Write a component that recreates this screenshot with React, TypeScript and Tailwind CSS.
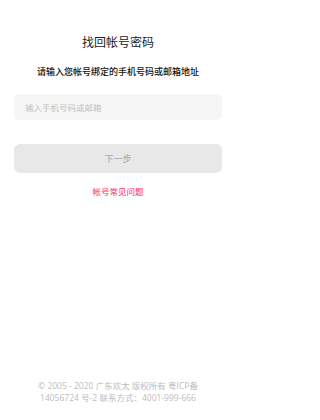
import React, { useState } from 'react';

const font = "font-['Noto_Sans_CJK_SC','Noto_Sans',sans-serif]";

const App: React.FC = () => {
    const [account, setAccount] = useState('');

    return (
        <div className={`flex min-h-[420px] w-[236px] flex-col bg-white ${font}`}>
            <div className="flex flex-1 flex-col px-[14px]">
                <h1 className="mt-[33px] text-center text-[12px] leading-[18px] text-[#222]">找回帐号密码</h1>
                <p className="mt-[14px] text-center text-[9px] font-medium leading-[14px] text-[#111]">请输入您帐号绑定的手机号码或邮箱地址</p>
                <input
                    value={account}
                    onChange={e => setAccount(e.target.value)}
                    placeholder="输入手机号码或邮箱"
                    className="mt-[15px] h-[26px] w-full rounded-[5px] bg-[#f6f6f6] px-[11px] text-[8.5px] text-[#333] outline-none placeholder:text-[#c2c2c2]"
                />
                <button
                    disabled={!account}
                    className="mt-[24px] h-[29px] w-full rounded-[6px] bg-[#e8e8e8] text-[9px] text-[#a6a6a6]"
                >
                    下一步
                </button>
                <a className="mt-[12px] text-center text-[8.5px] leading-[12px] text-[#fb2c5b]">帐号常见问题</a>
            </div>
            <footer className="flex flex-col gap-[1px] pb-[17px] text-center font-['Open_Sans','Noto_Sans_CJK_SC',sans-serif] text-[8.5px] leading-[10.5px] text-[#bdbdbd]">
                <p>© 2005 - 2020 广东欢太 版权所有 粤ICP备</p>
                <p>14056724 号-2 联系方式：4001-999-666</p>
            </footer>
        </div>
    );
};

export default App;
